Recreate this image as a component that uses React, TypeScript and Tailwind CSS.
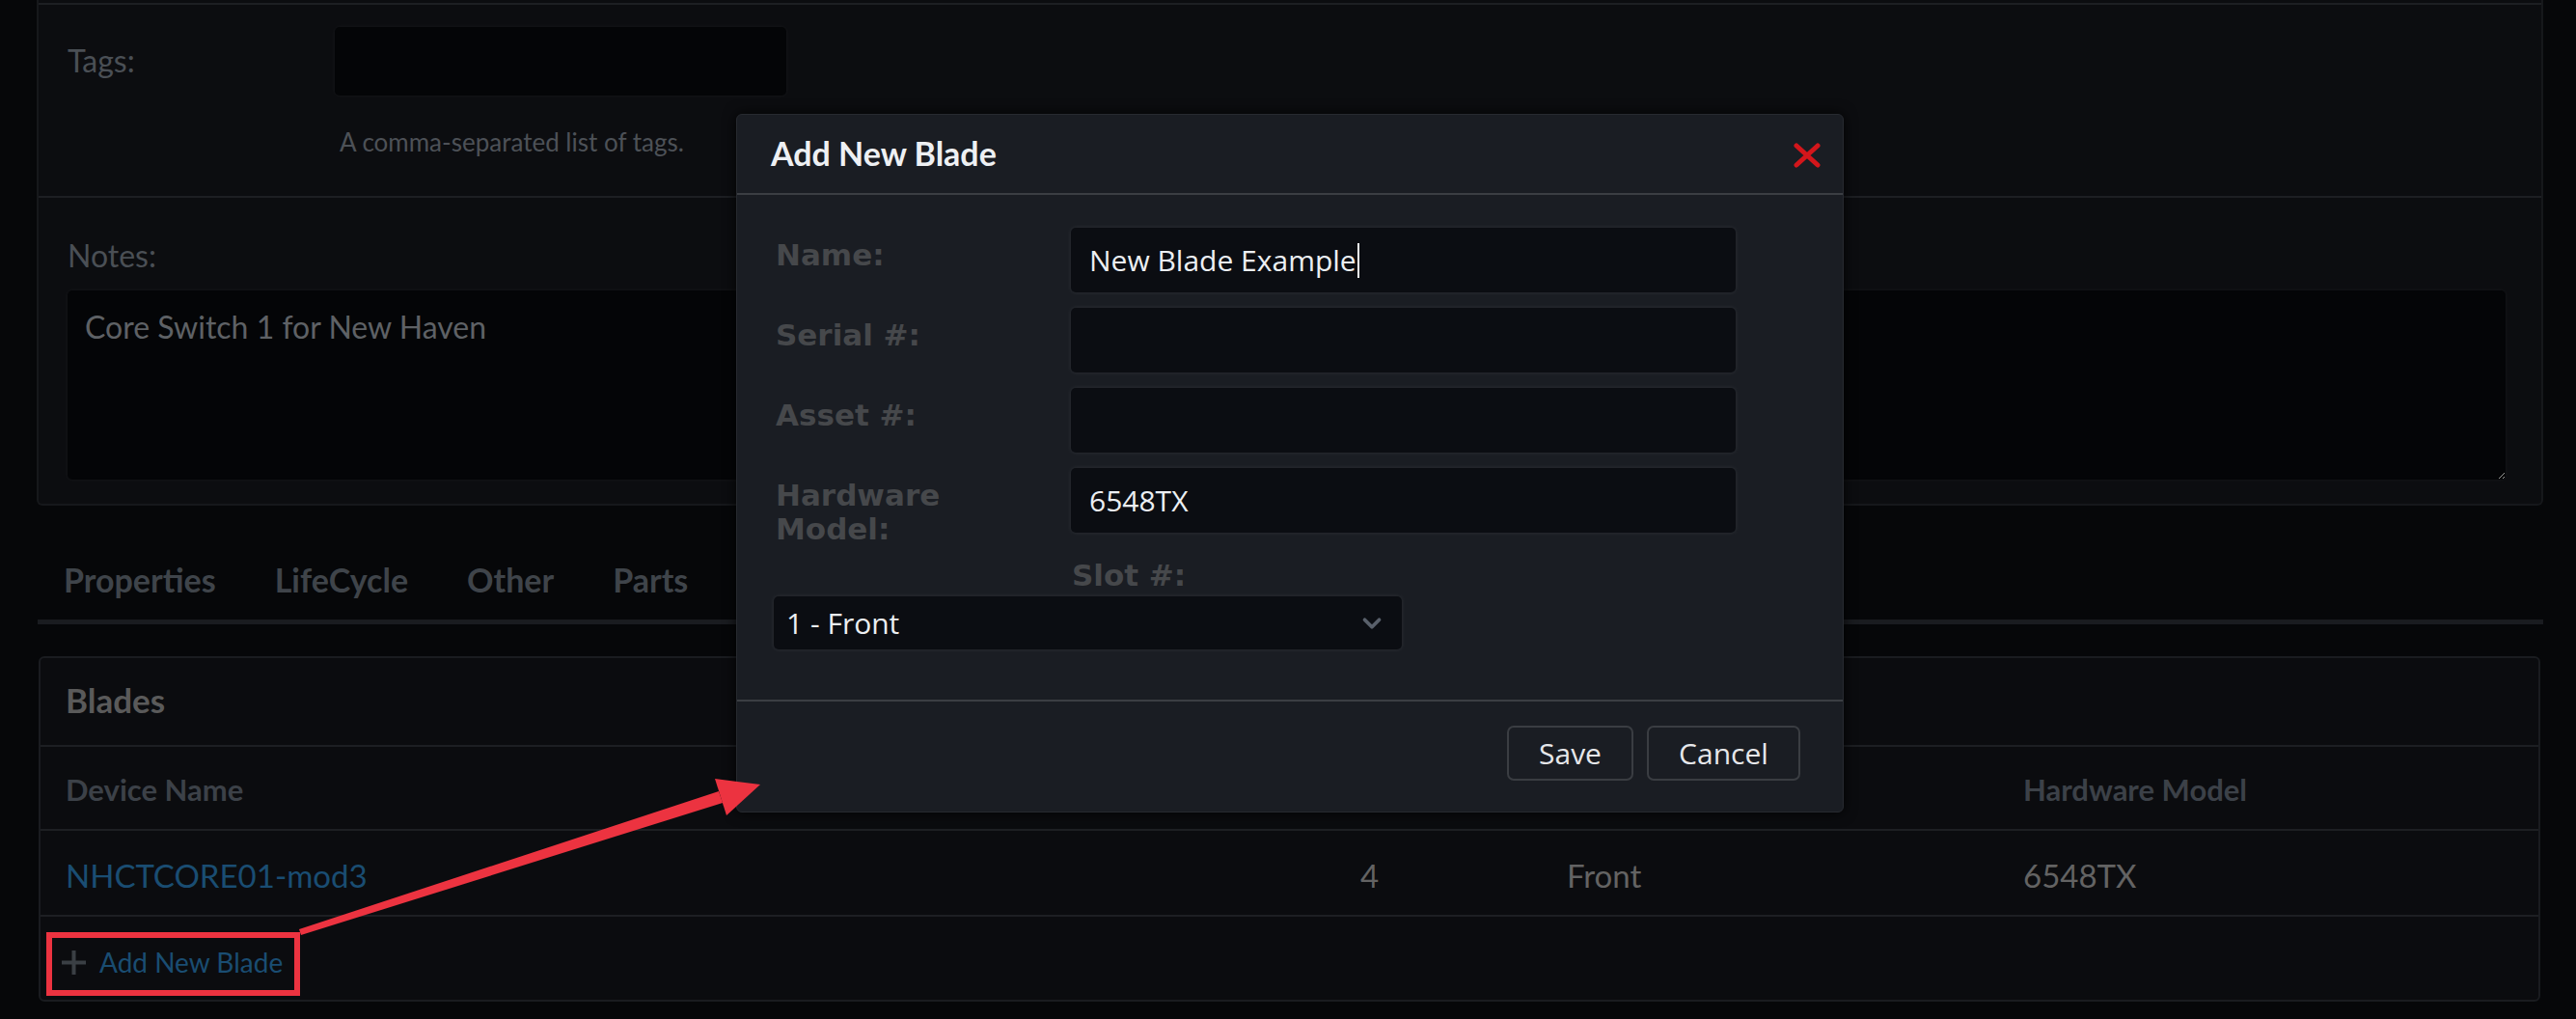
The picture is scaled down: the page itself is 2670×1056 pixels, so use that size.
import { ChevronDown } from "lucide-react";

const labelFont = "font-['DejaVu_Sans',sans-serif] font-bold text-[31px] leading-[35px] text-[#46484b]";
const fieldFont = "font-['Open_Sans',sans-serif] text-[30px] text-[#eceff3]";

function FieldRow({ label, value, caret }: { label: string; value?: string; caret?: boolean }) {
  return (
    <div className="flex h-[67px] items-start">
      <div className={`w-[306px] whitespace-pre-line pt-[11px] ${labelFont}`}>{label}</div>
      <div className="flex h-[67px] w-[689px] items-center rounded-[5px] bg-[#0b0d12] pl-[19px] shadow-[0_0_5px_rgba(255,255,255,0.09)]">
        <span className={fieldFont}>{value}</span>
        {caret ? <span className="ml-[1px] h-[36px] w-[2px] bg-[#f2f2f2]" /> : null}
      </div>
    </div>
  );
}

function AddBladeModal() {
  return (
    <div className="absolute left-[763px] top-[118px] flex h-[724px] w-[1148px] flex-col rounded-[6px] border border-[#272a30] bg-[#1a1d23] shadow-[0_0_14px_rgba(0,0,0,0.85)]">
      <div className="flex h-[83px] items-start justify-between border-b-2 border-[#3b3e43] pl-[35px] pr-[22px]">
        <h2 className="pt-[20px] font-['Lato',sans-serif] text-[34px] font-bold leading-[40px] text-[#eef0f3]">
          Add New Blade
        </h2>
        <svg width="30" height="26" viewBox="0 0 30 26" className="mt-[29px]">
          <path d="M4 3 L26 23 M26 3 L4 23" stroke="#d3161b" strokeWidth="5" strokeLinecap="round" />
        </svg>
      </div>

      <div className="flex h-[525px] flex-col border-b-2 border-[#3b3e43] pl-[40px] pt-[34px]">
        <div className="flex flex-col gap-[16px]">
          <FieldRow label="Name:" value="New Blade Example" caret />
          <FieldRow label="Serial #:" />
          <FieldRow label="Asset #:" />
          <FieldRow label={"Hardware\nModel:"} value="6548TX" />
        </div>
        <div className={`mt-[27px] pl-[307px] ${labelFont}`}>Slot #:</div>
        <div className="-ml-[2px] mt-[4px] flex h-[55px] w-[651px] items-center justify-between rounded-[5px] bg-[#0b0d12] pl-[13px] pr-[16px] shadow-[0_0_5px_rgba(255,255,255,0.09)]">
          <span className={fieldFont}>1 - Front</span>
          <ChevronDown className="h-[30px] w-[30px] text-[#59606b]" strokeWidth={3} />
        </div>
      </div>

      <div className="flex flex-1 items-start justify-end gap-[14px] pr-[44px] pt-[25px]">
        <button className="h-[57px] w-[131px] rounded-[7px] border-2 border-[#3a3d42] bg-[#1a1d23] font-['Open_Sans',sans-serif] text-[30px] text-[#e6e7ea]">
          Save
        </button>
        <button className="h-[57px] w-[159px] rounded-[7px] border-2 border-[#3a3d42] bg-[#1a1d23] font-['Open_Sans',sans-serif] text-[30px] text-[#e6e7ea]">
          Cancel
        </button>
      </div>
    </div>
  );
}

function Annotation() {
  return (
    <svg className="pointer-events-none absolute left-0 top-0" width="2670" height="1056" viewBox="0 0 2670 1056">
      <rect x="51" y="969" width="257" height="60" fill="none" stroke="#ec3340" strokeWidth="6" />
      <polygon points="310,963 745,820 749,832 312,969" fill="#ec3340" />
      <polygon points="788,813 741,807 753,845" fill="#ec3340" />
    </svg>
  );
}

export default function App() {
  const tabs = ["Properties", "LifeCycle", "Other", "Parts"];

  return (
    <div className="relative h-[1056px] w-full overflow-hidden bg-[#060709] font-['Lato',sans-serif]">
      {/* details card, scrolled so only its lower rows show */}
      <div className="ml-[38px] mr-[34px] rounded-b-[6px] border-x-2 border-b-2 border-[#16181b] bg-[#0c0d10]">
        <div className="h-[3px]" />
        <div className="flex h-[202px] border-y-2 border-[#1d1f23] pl-[30px]">
          <div className="w-[277px] pt-[39px] text-[32px] leading-[38px] text-[#4a4f55]">Tags:</div>
          <div className="flex flex-col pt-[23px]">
            <div className="h-[71px] w-[468px] rounded-[5px] bg-[#040507] shadow-[0_0_5px_rgba(255,255,255,0.05)]" />
            <p className="mt-[33px] pl-[5px] text-[26px] leading-[31px] text-[#4d5157]">A comma-separated list of tags.</p>
          </div>
        </div>
        <div className="flex flex-col pb-[25px] pl-[30px] pr-[37px] pt-[41px]">
          <div className="text-[32px] leading-[38px] text-[#4a4f55]">Notes:</div>
          <textarea
            readOnly
            defaultValue="Core Switch 1 for New Haven"
            className="mt-[17px] h-[196px] w-full rounded-[5px] bg-[#040507] px-[18px] pt-[19px] font-['Lato',sans-serif] text-[32px] leading-[38px] text-[#5e6165] outline-none shadow-[0_0_5px_rgba(255,255,255,0.05)]"
          />
        </div>
      </div>

      {/* tabs */}
      <div className="ml-[39px] mr-[34px] mt-[57px] flex gap-[61px] border-b-[5px] border-[#1a1c20] pb-[21px] pl-[27px]">
        {tabs.map((t) => (
          <span key={t} className="text-[34px] font-bold leading-[40px] text-[#3f444a]">
            {t}
          </span>
        ))}
      </div>

      {/* blades table */}
      <div className="ml-[40px] mr-[37px] mt-[33px] h-[358px] rounded-[6px] border-2 border-[#1a1c20] bg-[#0b0c0f]">
        <div className="h-[92px] border-b-2 border-[#1d1f23] pl-[26px] pt-[23px] text-[35px] font-bold leading-[40px] text-[#5a5a5a]">
          Blades
        </div>
        <div className="grid h-[87px] grid-cols-[1342px_214px_473px_1fr] border-b-2 border-[#1d1f23] pl-[26px] pt-[24px] text-[31px] font-bold leading-[40px] text-[#3c4148]">
          <span>Device Name</span>
          <span>Slot</span>
          <span>Position</span>
          <span>Hardware Model</span>
        </div>
        <div className="grid h-[89px] grid-cols-[1342px_214px_473px_1fr] border-b-2 border-[#1d1f23] pl-[26px] pt-[26px] text-[33px] leading-[40px] text-[#636363]">
          <span className="text-[#1a4d72]">NHCTCORE01-mod3</span>
          <span>4</span>
          <span>Front</span>
          <span>6548TX</span>
        </div>
        <div className="flex items-center gap-[13px] pl-[21px] pt-[30px]">
          <svg width="27" height="27" viewBox="0 0 27 27">
            <path d="M13.5 1 V26 M1 13.5 H26" stroke="#3a3f44" strokeWidth="4" />
          </svg>
          <span className="text-[28px] leading-[34px] text-[#1a4d72]">Add New Blade</span>
        </div>
      </div>

      <AddBladeModal />
      <Annotation />
    </div>
  );
}
